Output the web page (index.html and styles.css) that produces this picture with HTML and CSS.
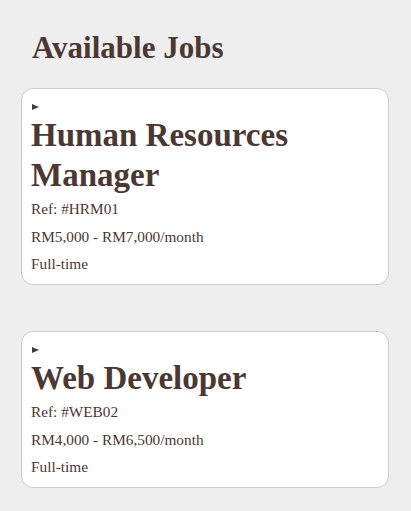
FILE: index.html
```html
<!DOCTYPE html>
<html lang="en">
<head>
<meta charset="utf-8">
<title>Available Jobs</title>
<link rel="stylesheet" href="styles.css">
</head>
<body>
<main class="page">
  <h1 class="page-title">Available Jobs</h1>
  <div class="job-list">
    <article class="job-card">
      <div class="job-toggle"><span class="marker"></span></div>
      <h2 class="job-title">Human Resources Manager</h2>
      <p class="job-meta">Ref: #HRM01</p>
      <p class="job-meta">RM5,000 - RM7,000/month</p>
      <p class="job-meta">Full-time</p>
    </article>
    <article class="job-card">
      <div class="job-toggle"><span class="marker"></span></div>
      <h2 class="job-title">Web Developer</h2>
      <p class="job-meta">Ref: #WEB02</p>
      <p class="job-meta">RM4,000 - RM6,500/month</p>
      <p class="job-meta">Full-time</p>
    </article>
  </div>
</main>
</body>
</html>
```

FILE: styles.css
```css
html, body {
  margin: 0;
  padding: 0;
  background: #eeeeee;
}

body {
  font-family: "Liberation Serif", "Times New Roman", serif;
  color: #4b3832;
}

.page {
  padding: 29px 22px 20px 21px;
}

.page-title {
  margin: 0 0 22px;
  padding-left: 11px;
  font-size: 31px;
  line-height: 37px;
  font-weight: bold;
}

.job-list {
  display: flex;
  flex-direction: column;
  gap: 46px;
}

.job-card {
  background: #ffffff;
  border: 1px solid #cccccc;
  border-radius: 12px;
  padding: 10px 10px 11px 9px;
}

.job-toggle {
  height: 16px;
  display: flex;
  align-items: center;
  padding-left: 1px;
}

.marker {
  display: block;
  width: 0;
  height: 0;
  border-left: 7px solid #4b3832;
  border-top: 3.5px solid transparent;
  border-bottom: 3.5px solid transparent;
}

.job-title {
  margin: 0;
  font-size: 33px;
  line-height: 40px;
  font-weight: bold;
}

.job-meta {
  margin: 0;
  font-size: 15.3px;
  line-height: 18px;
}

.job-title + .job-meta {
  margin-top: 5px;
}

.job-meta + .job-meta {
  margin-top: 9.5px;
}
```
